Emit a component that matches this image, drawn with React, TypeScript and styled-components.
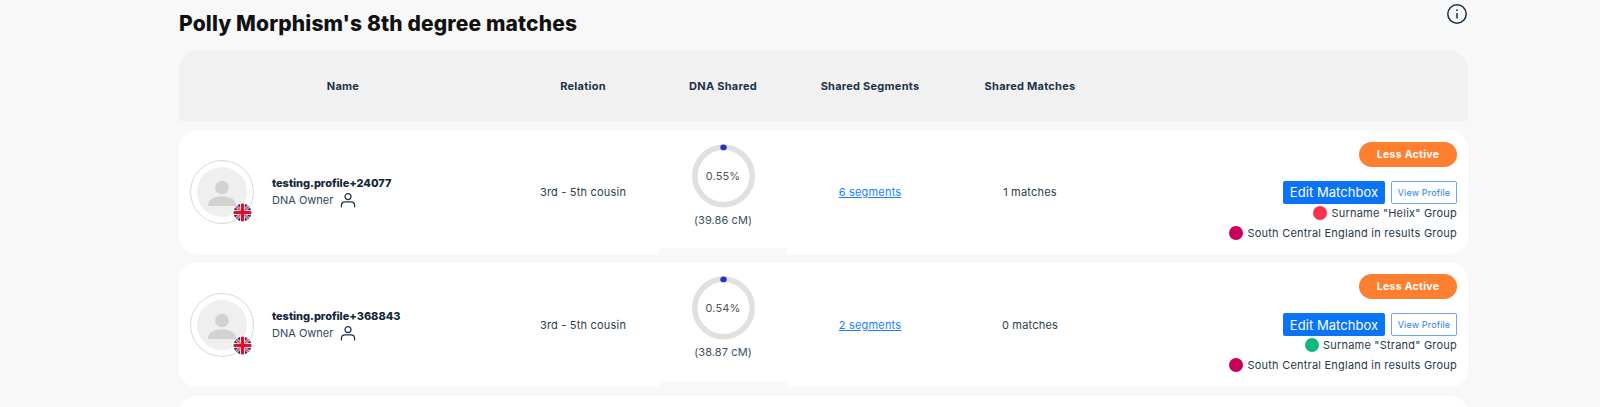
import * as React from "react";
import styled, { createGlobalStyle } from "styled-components";

const GlobalStyle = createGlobalStyle`
  html, body {
    margin: 0;
    height: 407px;
    overflow: hidden;
    background: #f8f8f8;
    font-family: Inter, "Open Sans", sans-serif;
  }
`;

const Page = styled.div`
  width: 1289px;
  height: 407px;
  overflow: hidden;
  margin-left: 179px;
  display: flex;
  flex-direction: column;
`;

const TitleBar = styled.div`
  height: 51px;
  flex-shrink: 0;
  display: flex;
  justify-content: space-between;
  align-items: flex-start;
`;

const Title = styled.h1`
  margin: 10px 0 0;
  font-size: 21px;
  line-height: 28px;
  font-weight: 800;
  letter-spacing: 0.15px;
  color: #111;
`;

const InfoButton = styled.div`
  margin: 3px 0 0;
  width: 22px;
  height: 22px;
  color: #14304a;
`;

const columns = "328px 152px 128px 166px 154px 1fr";

const HeaderRow = styled.div`
  height: 70px;
  flex-shrink: 0;
  margin-bottom: 9.5px;
  display: grid;
  grid-template-columns: ${columns};
  background: #f1f1f1;
  border-radius: 18px 18px 0 0;
  padding-bottom: 1px;
  box-sizing: border-box;
`;

const HeaderCell = styled.div`
  display: flex;
  align-items: center;
  justify-content: center;
  font-size: 11px;
  font-weight: 700;
  letter-spacing: 0.25px;
  color: #1c3349;
`;

const Row = styled.div`
  height: 123.7px;
  margin-bottom: 9px;
  flex-shrink: 0;
  display: grid;
  grid-template-columns: ${columns};
  background: #fff;
  border-radius: 18px;
`;

const NameCell = styled.div`
  display: flex;
  align-items: center;
  padding-left: 11px;
  gap: 18px;
`;

const Avatar = styled.div`
  position: relative;
  width: 64px;
  height: 64px;
  box-sizing: border-box;
  border: 1px solid #d8d8d8;
  border-radius: 50%;
  display: flex;
  align-items: center;
  justify-content: center;
`;

const AvatarFace = styled.div`
  width: 50px;
  height: 50px;
  border-radius: 50%;
  background: #efefef;
  overflow: hidden;
`;

const FlagBadge = styled.div`
  position: absolute;
  right: 1px;
  bottom: 1px;
  width: 19px;
  height: 19px;
`;

const NameText = styled.div`
  display: flex;
  flex-direction: column;
  gap: 2px;
`;

const ProfileName = styled.div`
  font-size: 11px;
  line-height: 14px;
  font-weight: 800;
  letter-spacing: -0.04px;
  color: #14273a;
`;

const OwnerLine = styled.div`
  display: flex;
  align-items: center;
  gap: 7px;
  font-size: 11px;
  line-height: 16px;
  color: #33475a;
`;

const TextCell = styled.div`
  display: flex;
  align-items: center;
  justify-content: center;
  font-size: 11px;
  letter-spacing: 0.2px;
  color: #2a3d50;
`;

const SegmentLink = styled.a`
  color: #1a7fff;
  font-size: 11px;
  text-decoration: underline;
`;

const DnaCell = styled.div`
  position: relative;
  display: flex;
  flex-direction: column;
  align-items: center;
  padding-top: 13px;

  &::after {
    content: "";
    position: absolute;
    left: 0;
    right: 0;
    bottom: 0;
    height: 6px;
    background: #f8f8f8;
  }
`;

const Ring = styled.div`
  position: relative;
  width: 64px;
  height: 64px;
`;

const RingLabel = styled.div`
  position: absolute;
  inset: 0;
  display: flex;
  align-items: center;
  justify-content: center;
  font-size: 11px;
  letter-spacing: 0.1px;
  color: #555;
`;

const CentiMorgans = styled.div`
  margin-top: 4px;
  font-size: 11px;
  line-height: 16px;
  letter-spacing: 0.1px;
  color: #3d5064;
`;

const ActionCell = styled.div`
  display: flex;
  flex-direction: column;
  align-items: flex-end;
  padding: 11px 11px 0 0;
`;

const ActivityBadge = styled.div`
  width: 98px;
  height: 25px;
  border-radius: 13px;
  background: #ff7f30;
  color: #fff;
  font-size: 10.5px;
  font-weight: 700;
  letter-spacing: 0.3px;
  display: flex;
  align-items: center;
  justify-content: center;
`;

const Buttons = styled.div`
  margin-top: 14px;
  display: flex;
  gap: 6px;
`;

const EditButton = styled.button`
  width: 102px;
  height: 23px;
  padding: 0;
  border: 0;
  border-radius: 2px;
  background: #0a74f5;
  color: #fff;
  font: 400 13px Inter, sans-serif;
  letter-spacing: 0.05px;
`;

const ViewButton = styled.button`
  width: 66px;
  height: 23px;
  padding: 0;
  box-sizing: border-box;
  border: 1px solid #6ea4f7;
  border-radius: 2px;
  background: #fff;
  color: #2a80f5;
  font: 400 9px Inter, sans-serif;
  letter-spacing: 0.15px;
`;

const GroupLine = styled.div`
  height: 20px;
  display: flex;
  align-items: center;
  gap: 4px;
  font-size: 11px;
  letter-spacing: 0.22px;
  color: #27394b;
`;

const GroupDot = styled.span<{ $color: string }>`
  width: 14px;
  height: 14px;
  border-radius: 50%;
  background: ${(p) => p.$color};
`;

const Groups = styled.div`
  margin-top: -1px;
  display: flex;
  flex-direction: column;
  align-items: flex-end;
`;

const InfoIcon = () => (
  <svg width="22" height="22" viewBox="0 0 22 22" fill="none" stroke="currentColor">
    <circle cx="11" cy="11" r="9.2" strokeWidth="1.5" />
    <line x1="11" y1="10" x2="11" y2="15.5" strokeWidth="1.5" />
    <circle cx="11" cy="7.2" r="0.9" fill="currentColor" stroke="none" />
  </svg>
);

const PersonSilhouette = () => (
  <svg width="50" height="50" viewBox="0 0 50 50" fill="#d2d2d2">
    <circle cx="25" cy="20.5" r="6.8" />
    <path d="M11 39 C11 32 17 29.5 25 29.5 C33 29.5 39 32 39 39 Z" />
  </svg>
);

const OwnerIcon = () => (
  <svg width="16" height="16" viewBox="0 0 16 16" fill="none" stroke="#1c3349" strokeWidth="1.2" strokeLinecap="round">
    <circle cx="8" cy="4.6" r="3" />
    <path d="M1.4 15 V13.4 C1.4 11 3.2 9.9 5 9.9 H11 C12.8 9.9 14.6 11 14.6 13.4 V15" />
  </svg>
);

const UkFlag = ({ id }: { id: string }) => (
  <svg width="19" height="19" viewBox="0 0 19 19">
    <defs>
      <clipPath id={id}>
        <circle cx="9.5" cy="9.5" r="9" />
      </clipPath>
    </defs>
    <circle cx="9.5" cy="9.5" r="9.5" fill="#fff" />
    <g clipPath={`url(#${id})`}>
      <rect width="19" height="19" fill="#fff" />
      <path d="M5 0 H7 V5 L3 1 Z M14 0 H12 V5 L16 1 Z M0 5 V7 H5 L1 3 Z M19 5 V7 H14 L18 3 Z M0 14 V12 H5 L1 16 Z M19 14 V12 H14 L18 16 Z M5 19 H7 V14 L3 18 Z M14 19 H12 V14 L16 18 Z" fill="#2b3a80" />
      <path d="M1 1 L18 18 M18 1 L1 18" stroke="#e0355a" strokeWidth="1.6" />
      <rect x="7.4" width="4.2" height="19" fill="#fff" />
      <rect y="7.4" width="19" height="4.2" fill="#fff" />
      <rect x="7.8" width="3.4" height="19" fill="#d5152e" />
      <rect y="7.8" width="19" height="3.4" fill="#d5152e" />
    </g>
  </svg>
);

// ring is the same for every row, the share is too small to show an arc
const DnaRing = ({ label }: { label: string }) => (
  <Ring>
    <svg width="64" height="64" viewBox="0 0 64 64" fill="none">
      <circle cx="32.5" cy="32" r="28.7" stroke="#e0e0e0" strokeWidth="5.5" />
      <ellipse cx="32.5" cy="3.4" rx="3.2" ry="2.8" fill="#1f35c0" />
    </svg>
    <RingLabel>{label}</RingLabel>
  </Ring>
);

const matches = [
  {
    name: "testing.profile+24077",
    percent: "0.55%",
    cm: "(39.86 cM)",
    segments: "6 segments",
    shared: "1 matches",
    group: 'Surname "Helix" Group',
    groupColor: "#fb3149",
  },
  {
    name: "testing.profile+368843",
    percent: "0.54%",
    cm: "(38.87 cM)",
    segments: "2 segments",
    shared: "0 matches",
    group: 'Surname "Strand" Group',
    groupColor: "#0fb882",
  },
];

export default function App() {
  return (
    <Page>
      <GlobalStyle />
      <TitleBar>
        <Title>Polly Morphism's 8th degree matches</Title>
        <InfoButton>
          <InfoIcon />
        </InfoButton>
      </TitleBar>
      <HeaderRow>
        <HeaderCell>Name</HeaderCell>
        <HeaderCell>Relation</HeaderCell>
        <HeaderCell>DNA Shared</HeaderCell>
        <HeaderCell>Shared Segments</HeaderCell>
        <HeaderCell>Shared Matches</HeaderCell>
        <HeaderCell />
      </HeaderRow>
      {matches.map((m, i) => (
        <Row key={m.name}>
          <NameCell>
            <Avatar>
              <AvatarFace>
                <PersonSilhouette />
              </AvatarFace>
              <FlagBadge>
                <UkFlag id={`flag-${i}`} />
              </FlagBadge>
            </Avatar>
            <NameText>
              <ProfileName>{m.name}</ProfileName>
              <OwnerLine>
                DNA Owner
                <OwnerIcon />
              </OwnerLine>
            </NameText>
          </NameCell>
          <TextCell>3rd - 5th cousin</TextCell>
          <DnaCell>
            <DnaRing label={m.percent} />
            <CentiMorgans>{m.cm}</CentiMorgans>
          </DnaCell>
          <TextCell>
            <SegmentLink href="#">{m.segments}</SegmentLink>
          </TextCell>
          <TextCell>{m.shared}</TextCell>
          <ActionCell>
            <ActivityBadge>Less Active</ActivityBadge>
            <Buttons>
              <EditButton>Edit Matchbox</EditButton>
              <ViewButton>View Profile</ViewButton>
            </Buttons>
            <Groups>
              <GroupLine>
                <GroupDot $color={m.groupColor} />
                {m.group}
              </GroupLine>
              <GroupLine>
                <GroupDot $color="#c8005a" />
                South Central England in results Group
              </GroupLine>
            </Groups>
          </ActionCell>
        </Row>
      ))}
      <Row />
    </Page>
  );
}
